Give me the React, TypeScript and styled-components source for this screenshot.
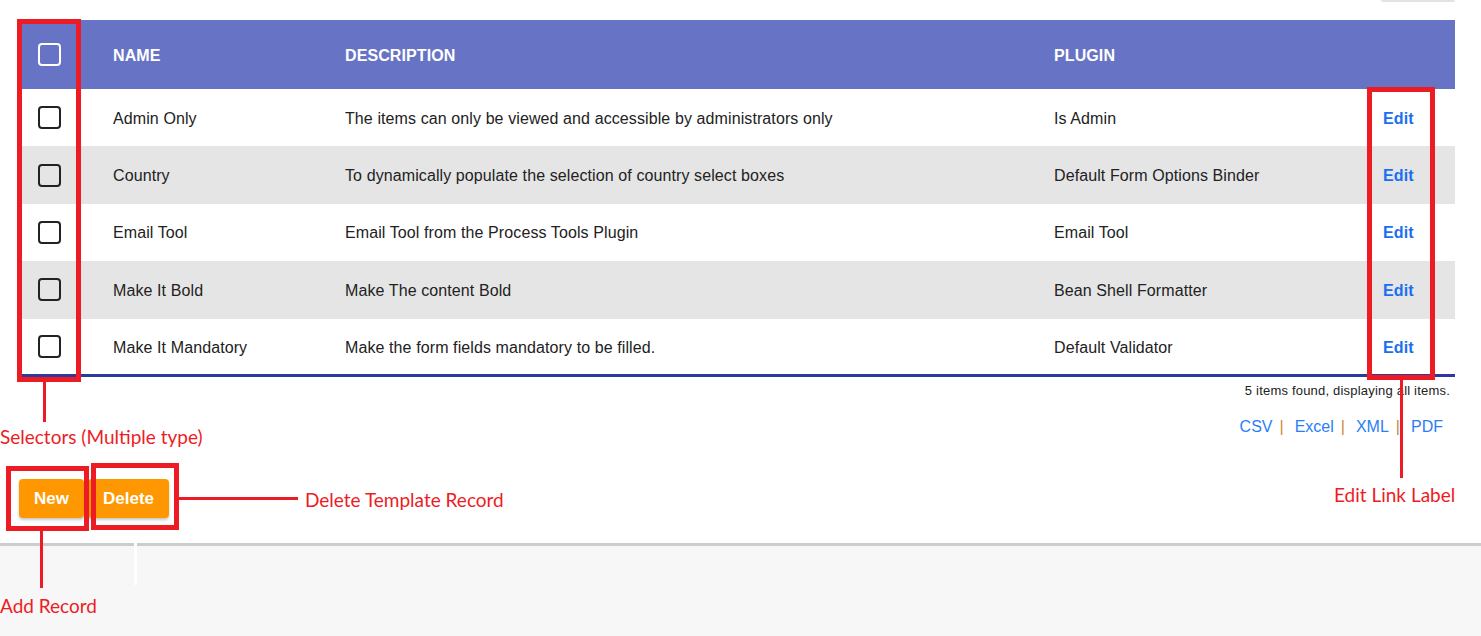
import React from "react";
import styled, { createGlobalStyle } from "styled-components";

const GlobalStyle = createGlobalStyle`
  html, body { margin: 0; padding: 0; background: #ffffff; }
  body { font-family: "Liberation Sans", Arial, sans-serif; color: #222; }
  * { box-sizing: border-box; }
`;

const Page = styled.div`
  position: relative;
  width: 1481px;
  height: 636px;
  overflow: hidden;
  display: flex;
  flex-direction: column;
  background: #f7f7f7;
`;

const Main = styled.div`
  background: #fff;
  border-bottom: 3px solid #cccccc;
  flex: none;
  height: 546px;
`;

const TopBar = styled.div`
  height: 20px;
  display: flex;
  justify-content: flex-end;
  padding-right: 26px;
`;

const TopButtonEdge = styled.div`
  width: 74px;
  height: 2px;
  background: #e2e2e2;
  border-radius: 0 0 3px 3px;
`;

const TableWrap = styled.div`
  margin: 0 26px 0 20px;
`;

const Table = styled.table`
  width: 100%;
  border-collapse: collapse;
  table-layout: fixed;
  border-bottom: 3px solid #2d3a9c;
`;

const HeadRow = styled.tr`
  background: #6774c6;
  height: 69px;
`;

const Th = styled.th<{ $w: number }>`
  width: ${(p) => p.$w}px;
  text-align: left;
  padding: 2px 0 0 33px;
  color: #fff;
  font-weight: bold;
  font-size: 16px;
  letter-spacing: 0.1px;
  text-transform: uppercase;
`;

const CheckTh = styled.th`
  width: 60px;
  padding: 0;
  text-align: center;
`;

const Row = styled.tr<{ $alt: boolean }>`
  height: 57.4px;
  background: ${(p) => (p.$alt ? "#e5e5e5" : "#ffffff")};
`;

const Td = styled.td`
  padding: 2px 0 0 33px;
  font-size: 16px;
  letter-spacing: 0.1px;
  color: #222;
  white-space: nowrap;
`;

const CheckTd = styled.td`
  padding: 0;
  text-align: center;
`;

const Box = styled.span<{ $light?: boolean }>`
  display: inline-block;
  width: 23px;
  height: 23px;
  border: 2px solid ${(p) => (p.$light ? "#ffffff" : "#222222")};
  border-radius: 4px;
  vertical-align: middle;
  margin-left: -1px;
`;

const EditLink = styled.a`
  color: #1a6ff0;
  font-weight: bold;
  font-size: 16px;
  text-decoration: none;
`;

const Summary = styled.div`
  text-align: right;
  font-size: 13px;
  letter-spacing: 0.2px;
  line-height: 16px;
  padding: 6px 5px 0 0;
  color: #222;
`;

const Exports = styled.div`
  display: flex;
  justify-content: flex-end;
  align-items: center;
  padding-right: 12px;
  margin-top: 18px;
  font-size: 16px;
  line-height: 20px;
`;

const ExportLink = styled.a`
  color: #2a7ef5;
  text-decoration: none;
`;

const Sep = styled.span`
  color: #c98a3a;
  margin: 0 11px 0 7px;
`;

const Buttons = styled.div`
  display: flex;
  gap: 4px;
  margin: 42px 0 0 19px;
`;

const Btn = styled.button`
  height: 39px;
  padding: 0 15px;
  background: #ff9800;
  color: #fff;
  border: none;
  border-radius: 4px;
  font-family: "Liberation Sans", Arial, sans-serif;
  font-weight: bold;
  font-size: 17px;
  box-shadow: 0 2px 3px rgba(0, 0, 0, 0.22);
  cursor: pointer;
`;

/* Annotation overlay */
const RED = "#ed1c24";

const Frame = styled.div`
  position: absolute;
  border: 5px solid ${RED};
  pointer-events: none;
`;

const Line = styled.div<{ $white?: boolean }>`
  position: absolute;
  background: ${(p) => (p.$white ? "#ffffff" : RED)};
  pointer-events: none;
`;

const Label = styled.div`
  position: absolute;
  color: ${RED};
  font-family: Lato, "Open Sans", sans-serif;
  font-size: 19px;
  line-height: 22px;
  white-space: nowrap;
  pointer-events: none;
`;

const rows = [
  ["Admin Only", "The items can only be viewed and accessible by administrators only", "Is Admin"],
  ["Country", "To dynamically populate the selection of country select boxes", "Default Form Options Binder"],
  ["Email Tool", "Email Tool from the Process Tools Plugin", "Email Tool"],
  ["Make It Bold", "Make The content Bold", "Bean Shell Formatter"],
  ["Make It Mandatory", "Make the form fields mandatory to be filled.", "Default Validator"],
];

type Rect = { l: number; t: number; r: number; b: number };
const box = (r: Rect): React.CSSProperties => ({
  left: r.l,
  top: r.t,
  width: r.r - r.l,
  height: r.b - r.t,
});

export default function App() {
  return (
    <Page>
      <GlobalStyle />
      <Main>
        <TopBar>
          <TopButtonEdge />
        </TopBar>
        <TableWrap>
          <Table>
            <thead>
              <HeadRow>
                <CheckTh>
                  <Box $light />
                </CheckTh>
                <Th $w={232}>Name</Th>
                <Th $w={709}>Description</Th>
                <Th $w={329}>Plugin</Th>
                <Th $w={105}></Th>
              </HeadRow>
            </thead>
            <tbody>
              {rows.map((r, i) => (
                <Row key={r[0]} $alt={i % 2 === 1}>
                  <CheckTd>
                    <Box />
                  </CheckTd>
                  <Td>{r[0]}</Td>
                  <Td>{r[1]}</Td>
                  <Td>{r[2]}</Td>
                  <Td>
                    <EditLink href="#">Edit</EditLink>
                  </Td>
                </Row>
              ))}
            </tbody>
          </Table>
          <Summary>5 items found, displaying all items.</Summary>
          <Exports>
            <ExportLink href="#">CSV</ExportLink>
            <Sep>|</Sep>
            <ExportLink href="#">Excel</ExportLink>
            <Sep>|</Sep>
            <ExportLink href="#">XML</ExportLink>
            <Sep>|</Sep>
            <ExportLink href="#">PDF</ExportLink>
          </Exports>
        </TableWrap>
        <Buttons>
          <Btn>New</Btn>
          <Btn>Delete</Btn>
        </Buttons>
      </Main>

      <Frame style={box({ l: 17, t: 19, r: 81, b: 382 })} />
      <Frame style={box({ l: 1367, t: 87, r: 1435, b: 380 })} />
      <Frame style={box({ l: 6, t: 466, r: 89, b: 531 })} />
      <Frame style={box({ l: 91, t: 463, r: 179, b: 530 })} />

      <Line style={box({ l: 43, t: 382, r: 46, b: 422 })} />
      <Line style={box({ l: 1400, t: 380, r: 1403, b: 478 })} />
      <Line style={box({ l: 179, t: 497, r: 298, b: 500 })} />
      <Line style={box({ l: 40, t: 531, r: 43, b: 588 })} />
      <Line $white style={box({ l: 134, t: 543, r: 137, b: 585 })} />

      <Label style={{ left: 0, top: 426 }}>Selectors (Multiple type)</Label>
      <Label style={{ left: 305, top: 489 }}>Delete Template Record</Label>
      <Label style={{ left: 1334, top: 484 }}>Edit Link Label</Label>
      <Label style={{ left: 0, top: 595 }}>Add Record</Label>
    </Page>
  );
}
